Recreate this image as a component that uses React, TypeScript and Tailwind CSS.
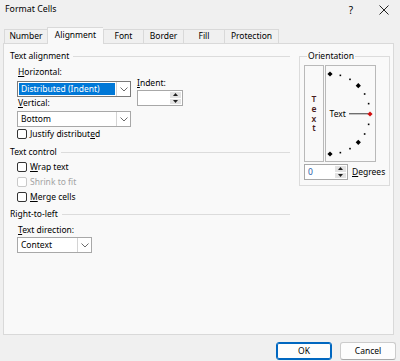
import React from "react";

const font = "font-['Noto_Sans','Open_Sans',sans-serif]";

function Chevron() {
  return (
    <svg width="8" height="5" viewBox="0 0 8 5">
      <path d="M0.5 0.5 L4 4 L7.5 0.5" fill="none" stroke="#6b6b6b" strokeWidth="1" />
    </svg>
  );
}

function Combo({ width, value, selected }: { width: string; value: string; selected?: boolean }) {
  return (
    <div className={`flex h-[16px] border bg-white ${width} ${selected ? "border-[#7a7a7a]" : "border-[#a8a8a8]"}`}>
      <div className="flex-1 flex p-[1px]">
        {selected ? (
          <span className="flex-1 flex items-center bg-[#0078d7] text-white px-[2px]">{value}</span>
        ) : (
          <span className="flex items-center px-[2px]">{value}</span>
        )}
      </div>
      <div className="w-[14px] border-l border-[#d4d4d4] flex items-center justify-center">
        <Chevron />
      </div>
    </div>
  );
}

function Spin({ width, value }: { width: string; value?: string }) {
  return (
    <div className={`flex h-[16px] border border-[#a8a8a8] bg-white ${width}`}>
      <div className="flex-1 flex items-center px-[3px] text-[#1f5aa6]">{value}</div>
      <div className="w-[13px] flex flex-col gap-[1px] p-[1px]">
        <div className="flex-1 bg-[#e3e3e3] flex items-center justify-center">
          <svg width="5" height="3" viewBox="0 0 5 3"><path d="M0 3 L2.5 0 L5 3 Z" fill="#202020" /></svg>
        </div>
        <div className="flex-1 bg-[#e3e3e3] flex items-center justify-center">
          <svg width="5" height="3" viewBox="0 0 5 3"><path d="M0 0 L2.5 3 L5 0 Z" fill="#202020" /></svg>
        </div>
      </div>
    </div>
  );
}

function Check({ label, disabled }: { label: React.ReactNode; disabled?: boolean }) {
  return (
    <div className={`flex items-center h-[14px] gap-[3px] ${disabled ? "text-[#a3a3a3]" : ""}`}>
      <div className={`w-[10px] h-[10px] rounded-[2px] border bg-white ${disabled ? "border-[#c9c9c9]" : "border-[#333333]"}`} />
      <span>{label}</span>
    </div>
  );
}

function GroupTitle({ title }: { title: string }) {
  return (
    <div className="flex items-center h-[12px]">
      <span>{title}</span>
      <div className="flex-1 h-px bg-[#dcdcdc] ml-[4px]" />
    </div>
  );
}

function Dial() {
  const dots = [];
  for (let a = 90; a >= -90; a -= 15) {
    if (a === 0) continue;
    const r = (a * Math.PI) / 180;
    const x = 4 + 40 * Math.cos(r);
    const y = 48 - 40 * Math.sin(r);
    if (a % 45 === 0) {
      dots.push(<path key={a} d={`M${x} ${y - 2.6} L${x + 2.6} ${y} L${x} ${y + 2.6} L${x - 2.6} ${y} Z`} fill="#000" />);
    } else {
      dots.push(<rect key={a} x={x - 0.8} y={y - 0.8} width="1.6" height="1.6" fill="#000" />);
    }
  }
  return (
    <svg width="49" height="95" viewBox="0 0 49 95">
      {dots}
      <text x="3.5" y="51" fontSize="8.5" fontFamily="Noto Sans, sans-serif" fill="#000">Text</text>
      <line x1="23" y1="47.5" x2="42" y2="47.5" stroke="#6f6f6f" strokeWidth="1" />
      <line x1="23" y1="48.5" x2="42" y2="48.5" stroke="#c4c4c4" strokeWidth="1" />
      <path d="M44 45.4 L46.6 48 L44 50.6 L41.4 48 Z" fill="#d01010" />
    </svg>
  );
}

export default function App() {
  const tabs = [
    { name: "Number", w: "w-[43px]" },
    { name: "Alignment", w: "w-[56px]", active: true },
    { name: "Font", w: "w-[40px]" },
    { name: "Border", w: "w-[40px]" },
    { name: "Fill", w: "w-[41px]" },
    { name: "Protection", w: "w-[55px]" },
  ];

  return (
    <div className={`w-[400px] h-[361px] bg-[#f0f0f0] text-[8.5px] text-black flex flex-col ${font}`}>
      {/* Title bar */}
      <div className="h-[20px] flex items-center pl-[5px]">
        <span className="text-[8.8px]">Format Cells</span>
        <span className="ml-auto text-[10px] mr-[26px]">?</span>
        <svg width="10" height="10" viewBox="0 0 10 10" className="mr-[11px]">
          <path d="M0.5 0.5 L9.5 9.5 M9.5 0.5 L0.5 9.5" stroke="#222" strokeWidth="1" />
        </svg>
      </div>

      {/* Tabs */}
      <div className="mt-[6px] h-[17px] flex items-end pl-[4px] relative z-10">
        {tabs.map((t, i) =>
          t.active ? (
            <div key={t.name} className={`${t.w} h-[17px] -mb-px bg-[#f9f9f9] border-t border-l border-[#d9d9d9] flex items-center justify-center pb-[1px]`}>
              {t.name}
            </div>
          ) : (
            <div key={t.name} className={`${t.w} h-[14px] border-t border-l border-[#d9d9d9] bg-[#f0f0f0] flex items-center justify-center ${i === tabs.length - 1 ? "border-r" : ""}`}>
              {t.name}
            </div>
          )
        )}
      </div>

      {/* Panel */}
      <div className="ml-[3px] w-[391px] h-[292px] border border-[#d9d9d9] bg-[#f9f9f9] flex pt-[6px] pl-[6px]">
        {/* Left column */}
        <div className="w-[280px] flex flex-col">
          <GroupTitle title="Text alignment" />
          <div className="pl-[7px] flex">
            <div className="flex flex-col w-[114px]">
              <div className="h-[12px] mt-[4px] pl-[1px] flex items-center"><span><u>H</u>orizontal:</span></div>
              <div className="mt-[3px]"><Combo width="w-[114px]" value="Distributed (Indent)" selected /></div>
              <div className="h-[12px] pl-[1px] flex items-center"><span><u>V</u>ertical:</span></div>
              <div className="mt-[2px]"><Combo width="w-[114px]" value="Bottom" /></div>
            </div>
            <div className="flex flex-col ml-[6px] pt-[15px]">
              <div className="h-[12px] flex items-center"><span><u>I</u>ndent:</span></div>
              <div className="mt-[1px]"><Spin width="w-[46px]" /></div>
            </div>
          </div>
          <div className="pl-[7px]">
            <Check label={<>Justify distribut<u>e</u>d</>} />
          </div>

          <div className="mt-[5px]"><GroupTitle title="Text control" /></div>
          <div className="pl-[7px] mt-[2px] flex flex-col gap-[1px]">
            <Check label={<><u>W</u>rap text</>} />
            <Check label="Shrink to fit" disabled />
            <Check label={<><u>M</u>erge cells</>} />
          </div>

          <div className="mt-[4px]"><GroupTitle title="Right-to-left" /></div>
          <div className="pl-[7px]">
            <div className="h-[12px] mt-[4px] pl-[1px] flex items-center"><span><u>T</u>ext direction:</span></div>
            <div className="mt-[1px]"><Combo width="w-[75px]" value="Context" /></div>
          </div>
        </div>

        {/* Orientation */}
        <fieldset className="ml-[9px] w-[91px] h-[136px] border border-[#dcdcdc] pl-[4px]">
          <legend className="ml-[3px] px-[1px] leading-[12px]">Orientation</legend>
          <div className="flex mt-[3px] gap-px">
            <div className="w-[20px] h-[97px] border border-[#b9b9b9] flex flex-col items-center justify-center text-[#4a1c1c] font-semibold">
              {["T", "e", "x", "t"].map((c) => (
                <span key={c} className="h-[9.7px] leading-[9.7px]">{c}</span>
              ))}
            </div>
            <div className="w-[51px] h-[97px] border border-[#b9b9b9]">
              <Dial />
            </div>
          </div>
          <div className="flex items-center mt-[2px]">
            <Spin width="w-[44px]" value="0" />
            <span className="ml-[4px]"><u>D</u>egrees</span>
          </div>
        </fieldset>
      </div>

      {/* Buttons */}
      <div className="flex justify-end gap-[8px] pr-[4px] mt-[7px]">
        <button className="w-[56px] h-[18px] rounded-[3px] bg-[#fdfdfd] border border-[#0067c0] shadow-[inset_0_0_0_1px_#0067c0]">OK</button>
        <button className="w-[56px] h-[18px] rounded-[3px] bg-[#fdfdfd] border border-[#cccccc] border-b-[#a8a8a8]">Cancel</button>
      </div>
    </div>
  );
}
